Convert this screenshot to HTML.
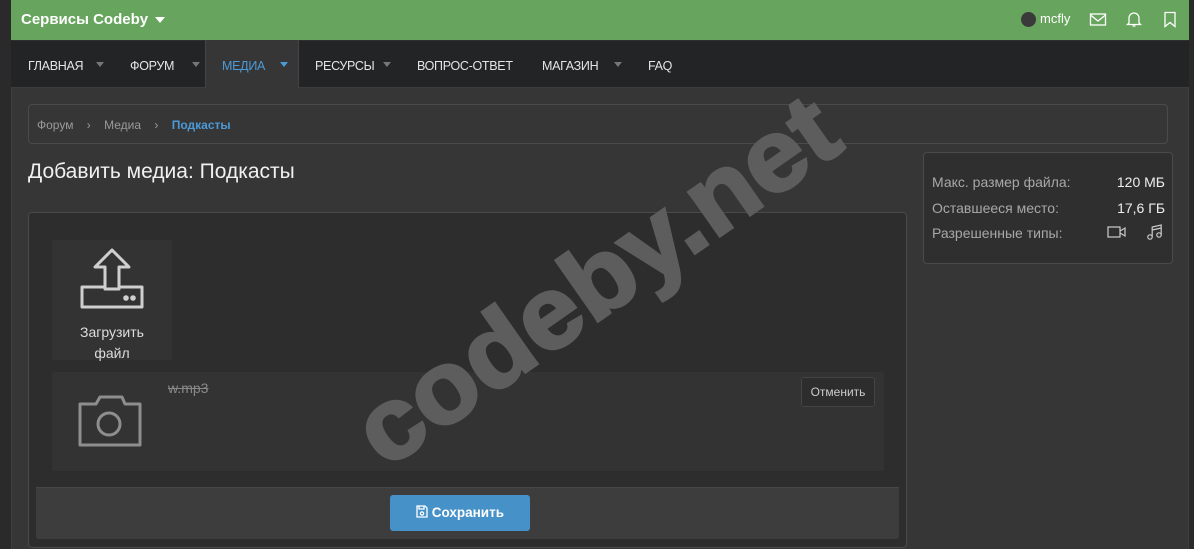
<!DOCTYPE html>
<html><head><meta charset="utf-8"><style>
*{box-sizing:border-box;margin:0;padding:0}
body{width:1194px;height:549px;overflow:hidden;background:#2a2a2a;font-family:"Liberation Sans",sans-serif;position:relative}
.main{position:absolute;left:11px;top:0;width:1178px;height:549px;background:#363636;border-left:1px solid #3e3e3e;border-right:1px solid #3e3e3e}
.hdr{position:absolute;left:11px;top:0;width:1178px;height:40px;background:#67a55e}
.nav{position:absolute;left:11px;top:40px;width:1178px;height:48px;background:#232425;border-top:1px solid #2e2e2e;border-bottom:1px solid #3c3c3c}
.abs{position:absolute}
.t{color:#fff;font-size:15px;font-weight:bold}
.ni{position:absolute;top:59px;font-size:12.5px;color:#e5e5e5;letter-spacing:-0.3px}
.car{position:absolute;top:62px;width:0;height:0;border-left:4px solid transparent;border-right:4px solid transparent;border-top:5px solid #777}
.box{position:absolute;border:1px solid #4a4a4a;border-radius:4px}
</style></head><body>
<div class="main"></div>
<div class="hdr"></div>
<div class="abs t" style="left:21px;top:11px">Сервисы Codeby</div>
<div class="abs" style="left:155px;top:17px;border-left:5px solid transparent;border-right:5px solid transparent;border-top:6px solid #fff"></div>
<div class="abs" style="left:1021px;top:12px;width:15px;height:15px;border-radius:50%;background:#3a3a3a"></div>
<div class="abs" style="left:1040px;top:11px;color:#fff;font-size:13px">mcfly</div>
<svg class="abs" style="left:1089px;top:12px" width="18" height="16" viewBox="0 0 18 16" fill="none" stroke="#fff" stroke-width="1.3"><rect x="1.5" y="2" width="15" height="11"/><path d="M1.5 3l7.5 6 7.5-6"/></svg>
<svg class="abs" style="left:1126px;top:11px" width="16" height="17" viewBox="0 0 16 17" fill="none" stroke="#fff" stroke-width="1.3"><path d="M3 12V7a5 5 0 0 1 10 0v5l1.5 1.5h-13z"/><path d="M6.5 15h3"/></svg>
<svg class="abs" style="left:1163px;top:11px" width="14" height="17" viewBox="0 0 14 17" fill="none" stroke="#fff" stroke-width="1.3"><path d="M2 1.5h10v14l-5-4-5 4z"/></svg>

<div class="nav"></div>
<div class="abs" style="left:205px;top:40px;width:94px;height:48px;background:#363636;border-left:1px solid #444;border-right:1px solid #444"></div>
<div class="ni" style="left:28px">ГЛАВНАЯ</div><div class="car" style="left:96px"></div>
<div class="ni" style="left:130px">ФОРУМ</div><div class="car" style="left:192px"></div>
<div class="ni" style="left:222px;color:#4b9ad8">МЕДИА</div><div class="car" style="left:280px;border-top-color:#4b9ad8"></div>
<div class="ni" style="left:315px">РЕСУРСЫ</div><div class="car" style="left:383px"></div>
<div class="ni" style="left:417px">ВОПРОС-ОТВЕТ</div>
<div class="ni" style="left:542px">МАГАЗИН</div><div class="car" style="left:614px"></div>
<div class="ni" style="left:648px">FAQ</div>

<div class="box" style="left:28px;top:104px;width:1140px;height:40px;background:#363636"></div>
<div class="abs" style="left:37px;top:118px;font-size:12px;color:#9a9a9a">Форум <span style="margin:0 10px">›</span> Медиа <span style="margin:0 10px">›</span> <b style="color:#4b9ad8">Подкасты</b></div>

<div class="abs" style="left:28px;top:160px;font-size:21px;color:#f0f0f0">Добавить медиа: Подкасты</div>

<div class="box" style="left:923px;top:152px;width:250px;height:112px;background:#2f2f2f"></div>
<div class="abs" style="left:932px;top:170px;font-size:14px;color:#a8a8a8;line-height:25.5px">Макс. размер файла:<br>Оставшееся место:<br>Разрешенные типы:</div>
<div class="abs" style="left:1100px;top:170px;width:65px;text-align:right;font-size:14px;color:#eee;line-height:25.5px">120 МБ<br>17,6 ГБ</div>
<svg class="abs" style="left:1107px;top:225px" width="20" height="14" viewBox="0 0 20 14" fill="none" stroke="#ccc" stroke-width="1.2"><rect x="1" y="2" width="12" height="10"/><path d="M13 6l5-3v8l-5-3"/></svg>
<svg class="abs" style="left:1146px;top:223px" width="18" height="18" viewBox="0 0 18 18" fill="none" stroke="#ccc" stroke-width="1.2"><circle cx="4" cy="14" r="2.2"/><circle cx="13" cy="12" r="2.2"/><path d="M6.2 14V4l9-2v10M6.2 7l9-2"/></svg>

<div class="box" style="left:28px;top:212px;width:879px;height:336px;background:#2d2d2d"></div>
<div class="abs" style="left:52px;top:240px;width:120px;height:120px;background:#333;border-radius:3px"></div>
<svg class="abs" style="left:52px;top:240px" width="120" height="80" viewBox="0 0 120 80" fill="none" stroke="#cfcfcf" stroke-width="3" stroke-linejoin="round" stroke-linecap="round"><path d="M60 10L43 27h10v22h14V27h10z"/><path d="M53 47H30v20h60V47H67"/><circle cx="74" cy="58" r="1.3" fill="#cfcfcf"/><circle cx="81" cy="58" r="1.3" fill="#cfcfcf"/></svg>
<div class="abs" style="left:52px;top:322px;width:120px;text-align:center;font-size:14px;color:#ddd;line-height:21px">Загрузить<br>файл</div>

<div class="abs" style="left:52px;top:372px;width:832px;height:99px;background:#333;border-radius:3px"></div>
<svg class="abs" style="left:76px;top:392px" width="68" height="58" viewBox="0 0 68 58" fill="none" stroke="#8e8e8e" stroke-width="3" stroke-linejoin="round"><path d="M4 12h16l4-7h22l3 7h15v41H4z"/><circle cx="33" cy="32" r="11"/></svg>
<div class="abs" style="left:168px;top:380px;font-size:14px;color:#888;text-decoration:line-through">w.mp3</div>
<div class="abs" style="left:801px;top:377px;width:74px;height:30px;border:1px solid #444;border-radius:3px;background:#2d2d2d;font-size:12px;color:#ccc;text-align:center;line-height:28px">Отменить</div>

<div class="abs" style="left:36px;top:487px;width:863px;height:52px;background:#3d3d3d;border-top:1px solid #474747;border-radius:0 0 3px 3px"></div>
<div class="abs" style="left:390px;top:495px;width:140px;height:36px;background:#4691c8;border-radius:3px;color:#fff;font-size:13.5px;font-weight:bold;text-align:center;line-height:36px">
<svg width="12" height="13" viewBox="0 0 12 13" style="vertical-align:-1px" fill="none" stroke="#fff" stroke-width="1.3"><path d="M1 1h8l2 2v9H1z"/><path d="M3 1v3h5V1"/><circle cx="6" cy="8.5" r="1.6"/></svg> Сохранить</div>

<div class="abs" style="left:596px;top:280px;transform:translate(-50%,-50%) rotate(-35deg) scaleX(1.06);font-size:102px;font-weight:bold;color:#5d5d5d;-webkit-text-stroke:3px #5d5d5d;white-space:nowrap;line-height:1;font-family:'Liberation Sans',sans-serif">codeby.net</div>
</body></html>
